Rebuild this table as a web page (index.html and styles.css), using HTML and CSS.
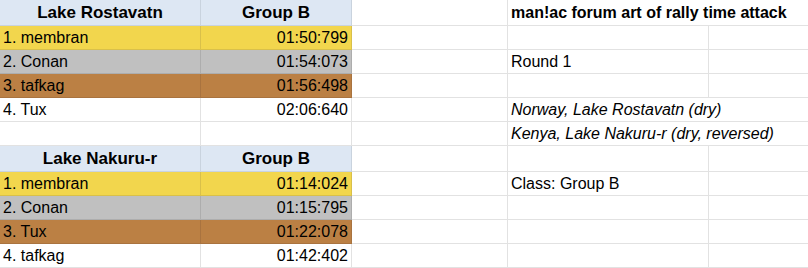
FILE: index.html
```html
<!DOCTYPE html>
<html>
<head>
<meta charset="utf-8">
<link rel="stylesheet" href="styles.css">
</head>
<body>
<div class="sheet">
  <div class="c hd center">Lake Rostavatn</div>
  <div class="c hd center">Group B</div>
  <div class="c"></div>
  <div class="c span title">man!ac forum art of rally time attack</div>

  <div class="c gold">1. membran</div>
  <div class="c gold right">01:50:799</div>
  <div class="c"></div>
  <div class="c"></div>
  <div class="c last"></div>

  <div class="c silver">2. Conan</div>
  <div class="c silver right">01:54:073</div>
  <div class="c"></div>
  <div class="c">Round 1</div>
  <div class="c last"></div>

  <div class="c bronze">3. tafkag</div>
  <div class="c bronze right">01:56:498</div>
  <div class="c"></div>
  <div class="c"></div>
  <div class="c last"></div>

  <div class="c">4. Tux</div>
  <div class="c right">02:06:640</div>
  <div class="c"></div>
  <div class="c span it">Norway, Lake Rostavatn (dry)</div>

  <div class="c"></div>
  <div class="c"></div>
  <div class="c"></div>
  <div class="c span it">Kenya, Lake Nakuru-r (dry, reversed)</div>

  <div class="c hd center">Lake Nakuru-r</div>
  <div class="c hd center">Group B</div>
  <div class="c"></div>
  <div class="c"></div>
  <div class="c last"></div>

  <div class="c gold">1. membran</div>
  <div class="c gold right">01:14:024</div>
  <div class="c"></div>
  <div class="c">Class: Group B</div>
  <div class="c last"></div>

  <div class="c silver">2. Conan</div>
  <div class="c silver right">01:15:795</div>
  <div class="c"></div>
  <div class="c"></div>
  <div class="c last"></div>

  <div class="c bronze">3. Tux</div>
  <div class="c bronze right">01:22:078</div>
  <div class="c"></div>
  <div class="c"></div>
  <div class="c last"></div>

  <div class="c">4. tafkag</div>
  <div class="c right">01:42:402</div>
  <div class="c"></div>
  <div class="c"></div>
  <div class="c last"></div>
</div>
</body>
</html>
```
FILE: styles.css
```css
html, body {
  margin: 0;
  padding: 0;
  background: #ffffff;
}
body {
  font-family: "Liberation Sans", Arial, sans-serif;
  font-size: 16px;
  color: #000000;
  overflow: hidden;
}
.sheet {
  display: grid;
  grid-template-columns: 201px 151px 156px 201px 100px;
  grid-template-rows: 26px 24px 24px 24px 24px 24px 26px 24px 24px 24px 24px;
  width: 808px;
}
.c {
  box-sizing: border-box;
  border-right: 1px solid #e2e2e2;
  border-bottom: 1px solid #e2e2e2;
  padding: 0 3px;
  line-height: 23px;
  white-space: nowrap;
  overflow: visible;
}
.c.last {
  border-right: none;
}
.span {
  grid-column: span 2;
  border-right: none;
}
.hd {
  background: #dde7f3;
  border-color: #c9d3de;
  font-weight: bold;
  font-size: 17px;
  line-height: 25px;
}
.title {
  font-weight: bold;
  line-height: 25px;
}
.it {
  font-style: italic;
}
.center {
  text-align: center;
}
.right {
  text-align: right;
}
.gold {
  background: #f2d64d;
  border-color: #d9c04a;
}
.silver {
  background: #c0c0c0;
  border-color: #adadad;
}
.bronze {
  background: #bb8044;
  border-color: #a9733f;
}
```
